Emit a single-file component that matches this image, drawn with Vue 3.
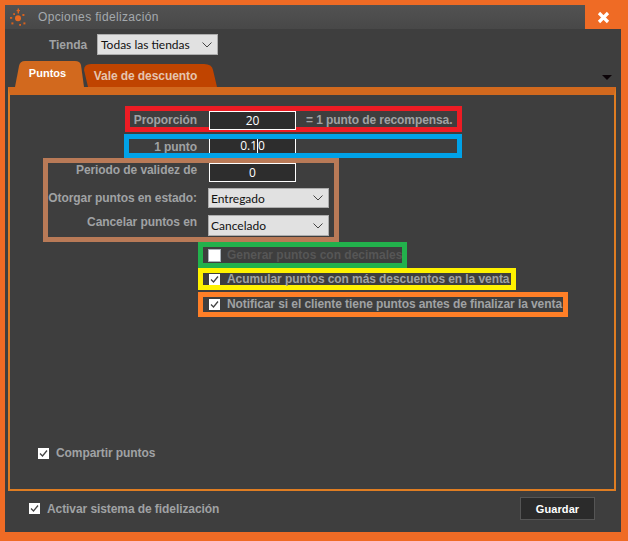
<script setup>
const tabs = ['Puntos', 'Vale de descuento']
</script>

<template>
  <div class="frame">
    <div class="window">
      <header class="titlebar">
        <svg class="sun" width="18" height="18" viewBox="0 0 18 18">
          <circle cx="9" cy="10.3" r="3" fill="#e8681f" />
          <rect x="8.6" y="0.5" width="1.4" height="5" fill="#e0651f" />
          <rect x="7.6" y="2" width="3.4" height="1.2" fill="#e0651f" />
          <rect x="4.2" y="5.2" width="1.8" height="1.8" fill="#d8621e" />
          <rect x="13.4" y="6" width="2" height="2" fill="#d8621e" />
          <rect x="1" y="9" width="2.2" height="1.8" fill="#d8621e" />
          <rect x="2.4" y="14.4" width="2" height="2" fill="#d8621e" />
          <rect x="14.4" y="14.4" width="2" height="2" fill="#d8621e" />
          <rect x="10.2" y="16" width="1.8" height="1.8" fill="#d8621e" />
        </svg>
        <span class="title">Opciones fidelización</span>
        <button class="close">
          <svg width="13" height="13" viewBox="0 0 13 13">
            <path d="M2 2 L11 11 M11 2 L2 11" stroke="#fff" stroke-width="3.2" fill="none" />
          </svg>
        </button>
      </header>

      <div class="store-row">
        <span class="store-label">Tienda</span>
        <div class="select store-select">
          <span>Todas las tiendas</span>
          <svg class="chev" width="10" height="6" viewBox="0 0 10 6"><path d="M0.5 0.5 L5 5 L9.5 0.5" stroke="#444" fill="none" /></svg>
        </div>
      </div>

      <div class="tabstrip">
        <div class="tab tab-active">{{ tabs[0] }}</div>
        <div class="tab tab-other">{{ tabs[1] }}</div>
        <span class="tab-arrow"></span>
      </div>

      <section class="panel">
        <div class="mark mark-red row">
          <label class="lbl lbl-red">Proporción</label>
          <div class="input">20</div>
          <span class="suffix">= 1 punto de recompensa.</span>
        </div>
        <div class="mark mark-blue row">
          <label class="lbl lbl-blue">1 punto</label>
          <div class="input input-cut">0.1<i class="caret"></i>0</div>
        </div>
        <div class="mark mark-brown">
          <div class="frow frow1">
            <label class="lbl lbl-brown">Periodo de validez de</label>
            <div class="input input-period">0</div>
          </div>
          <div class="frow frow2">
            <label class="lbl lbl-brown lbl-mid">Otorgar puntos en estado:</label>
            <div class="select wide">
              <span>Entregado</span>
              <svg class="chev" width="10" height="6" viewBox="0 0 10 6"><path d="M0.5 0.5 L5 5 L9.5 0.5" stroke="#444" fill="none" /></svg>
            </div>
          </div>
          <div class="frow frow3">
            <label class="lbl lbl-brown">Cancelar puntos en</label>
            <div class="select wide tall">
              <span>Cancelado</span>
              <svg class="chev" width="10" height="6" viewBox="0 0 10 6"><path d="M0.5 0.5 L5 5 L9.5 0.5" stroke="#444" fill="none" /></svg>
            </div>
          </div>
        </div>

        <div class="mark mark-green check-row">
          <span class="box box-empty"></span>
          <span class="disabled">Generar puntos con decimales</span>
        </div>
        <div class="mark mark-yellow check-row">
          <span class="box"><svg width="9" height="9" viewBox="0 0 9 9"><path d="M1 4.5 L3.5 7 L8 1.5" stroke="#444" stroke-width="1.3" fill="none" /></svg></span>
          <span class="txt">Acumular puntos con más descuentos en la venta</span>
        </div>
        <div class="mark mark-orange check-row">
          <span class="box"><svg width="9" height="9" viewBox="0 0 9 9"><path d="M1 4.5 L3.5 7 L8 1.5" stroke="#444" stroke-width="1.3" fill="none" /></svg></span>
          <span class="txt">Notificar si el cliente tiene puntos antes de finalizar la venta</span>
        </div>

        <div class="share">
          <span class="box"><svg width="9" height="9" viewBox="0 0 9 9"><path d="M1 4.5 L3.5 7 L8 1.5" stroke="#444" stroke-width="1.3" fill="none" /></svg></span>
          <span class="txt">Compartir puntos</span>
        </div>
      </section>

      <footer class="footer">
        <span class="box"><svg width="9" height="9" viewBox="0 0 9 9"><path d="M1 4.5 L3.5 7 L8 1.5" stroke="#444" stroke-width="1.3" fill="none" /></svg></span>
        <span class="txt">Activar sistema de fidelización</span>
        <button class="save">Guardar</button>
      </footer>
    </div>
  </div>
</template>

<style>
html, body { margin: 0; padding: 0; background: #ef6b25; }
</style>

<style scoped>
.frame {
  width: 628px;
  height: 541px;
  box-sizing: border-box;
  padding: 5px 7px 9px 5px;
  background: #ef6b25;
  font-family: "Liberation Sans", Arial, sans-serif;
  font-size: 12px;
  color: #a0a2a4;
}
.window {
  width: 616px;
  height: 527px;
  background: #3e3e3e;
  display: flex;
  flex-direction: column;
}
.titlebar {
  height: 24px;
  flex: none;
  display: flex;
  align-items: center;
  background: linear-gradient(#525252, #484848);
  padding-left: 4px;
}
.sun { flex: none; }
.title { margin-left: 11px; letter-spacing: 0.35px; color: #a4a9ad; }
.close {
  margin-left: auto;
  width: 36px;
  height: 24px;
  border: 0;
  padding: 0;
  background: #ef6b25;
  display: flex;
  align-items: center;
  justify-content: center;
}
.store-row {
  height: 32px;
  flex: none;
  display: flex;
  align-items: flex-start;
  padding-top: 5px;
  box-sizing: border-box;
}
.store-label { margin: 4px 10px 0 44px; font-weight: bold; width: 38px; line-height: 14px; letter-spacing: -0.08px; }
.select {
  box-sizing: border-box;
  height: 20px;
  background: #e1e1e1;
  border: 1px solid #adadad;
  color: #111;
  font-family: Lato, sans-serif;
  font-size: 12px;
  display: flex;
  align-items: center;
  justify-content: space-between;
  padding: 0 5px 0 2px;
}
.store-select { width: 121px; height: 21px; padding-left: 3px; }
.chev { flex: none; }
.tabstrip {
  height: 26px;
  flex: none;
  position: relative;
  display: flex;
  align-items: flex-end;
  margin-left: 3px;
  padding-left: 7px;
}
.tab { font-weight: bold; box-sizing: border-box; text-align: center; }
.tab-active {
  width: 69px;
  height: 26px;
  background: #d2691e;
  color: #fff;
  font-size: 11px;
  line-height: 25px;
  clip-path: path('M0 26 L4 5 Q5 0 10 0 L60 0 Q65 0 66 4 L69 26 Z');
  padding-right: 4px;
}
.tab-other {
  width: 133px;
  height: 23px;
  background: #c04400;
  color: #e6c4ae;
  line-height: 24px;
  clip-path: path('M4 23 L0 6 Q0 0 7 0 L120 0 Q128 0 129 6 L133 23 Z');
  padding-right: 10px;
  font-size: 12px;
  letter-spacing: -0.08px;
}
.tab-arrow {
  position: absolute;
  left: 594px;
  top: 14px;
  width: 0;
  height: 0;
  border-left: 5px solid transparent;
  border-right: 5px solid transparent;
  border-top: 5px solid #0c0408;
}
.panel {
  margin-left: 3px;
  width: 608px;
  height: 404px;
  flex: none;
  box-sizing: border-box;
  border: 2px solid #df7d22;
  border-top: 8px solid #d2691e;
  display: flex;
  flex-direction: column;
}
.mark { box-sizing: border-box; border-style: solid; border-width: 5px; }
.row { display: flex; align-items: flex-start; }
.mark-red { border-color: #ed1c24; margin: 11px 0 0 115px; width: 337px; height: 26px; }
.mark-blue { border-color: #00a2e8; margin: 2px 0 0 114px; width: 338px; height: 24px; overflow: hidden; }
.mark-brown { border-color: #b97a57; margin: 0 0 0 33px; width: 296px; height: 84px; display: flex; flex-direction: column; }
.mark-green { border-color: #22b14c; margin-left: 188px; width: 209px; height: 26px; }
.mark-yellow { border-color: #fff200; margin-left: 188px; width: 318px; height: 22px; }
.mark-orange { border-color: #ff7f27; margin: 2px 0 0 188px; width: 370px; height: 25px; }
.lbl { display: block; text-align: right; font-weight: bold; line-height: 14px; flex: none; letter-spacing: -0.08px; }
.lbl-red { width: 67px; margin-top: 2px; }
.lbl-blue { width: 68px; margin-top: 1px; }
.lbl-brown { width: 149px; white-space: nowrap; }
.lbl-mid { align-self: center; }
.input {
  box-sizing: border-box;
  flex: none;
  width: 87px;
  height: 19px;
  margin-left: 12px;
  background: #2d2d2d;
  border: 1px solid #fff;
  color: #fff;
  font-family: "Open Sans", sans-serif;
  font-size: 12px;
  line-height: 18px;
  text-align: center;
}
.input-cut { border-width: 0 1px; height: 14px; line-height: 14px; position: relative; }
.caret { display: inline-block; width: 1px; height: 14px; background: #fff; vertical-align: top; }
.input-period { margin-left: 12px; }
.suffix { margin: 2px 0 0 10px; font-weight: bold; line-height: 14px; white-space: nowrap; letter-spacing: -0.08px; }
.frow { display: flex; flex: none; align-items: flex-start; }
.frow1 { height: 19px; }
.frow2 { height: 20px; margin-top: 6px; }
.frow3 { height: 21px; margin-top: 7px; }
.wide { width: 121px; margin-left: 11px; flex: none; }
.tall { height: 21px; }
.check-row { display: flex; align-items: center; }
.box {
  box-sizing: border-box;
  flex: none;
  width: 11px;
  height: 11px;
  background: #fff;
  display: flex;
  align-items: center;
  justify-content: center;
}
.mark-green .box { margin-left: 5px; }
.mark-yellow .box, .mark-orange .box { margin-left: 6px; }
.box-empty { width: 13px; height: 13px; border: 1px solid #a8b0b8; }
.check-row .txt, .disabled { margin-left: 7px; }
.mark-green .disabled { margin-left: 6px; }
.txt { font-weight: bold; white-space: nowrap; letter-spacing: -0.08px; }
.mark-orange .txt { margin-bottom: 2px; }
.disabled { font-weight: bold; color: #565656; white-space: nowrap; }
.share {
  margin: auto 0 0 28px;
  padding-bottom: 29px;
  display: flex;
  align-items: center;
  gap: 7px;
}
.share .txt { margin-top: -1px; }
.footer {
  flex: 1;
  display: flex;
  align-items: flex-start;
  padding: 6px 26px 0 24px;
  box-sizing: border-box;
}
.footer .box { margin-top: 6px; }
.footer .txt { margin: 5px 0 0 7px; line-height: 14px; }
.save {
  margin-left: auto;
  width: 75px;
  height: 23px;
  box-sizing: border-box;
  background: #2b2b2b;
  border: 1px solid #555;
  color: #fff;
  font: bold 11px "Liberation Sans", Arial, sans-serif;
  letter-spacing: 0.1px;
  padding: 0;
}
</style>
